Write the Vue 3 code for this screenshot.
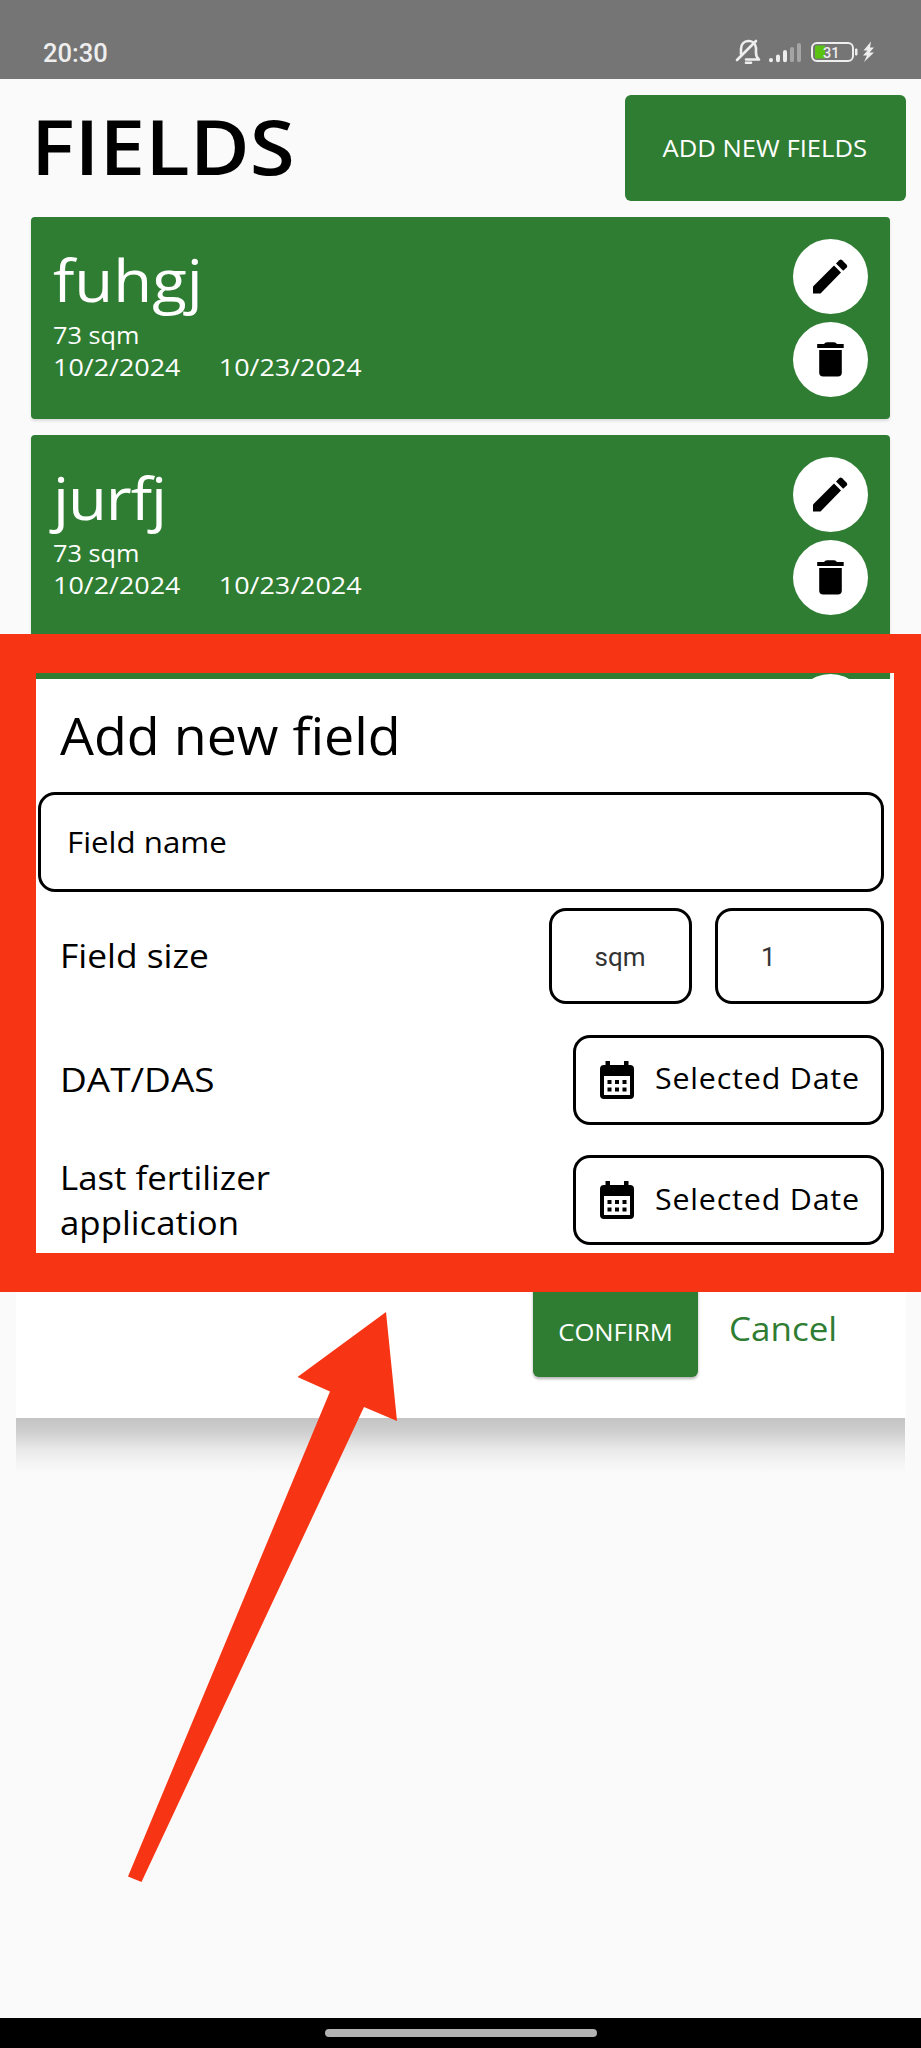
<script setup>
const fields = [
  { name: 'fuhgj', size: '73 sqm', from: '10/2/2024', to: '10/23/2024' },
  { name: 'jurfj', size: '73 sqm', from: '10/2/2024', to: '10/23/2024', tight: true },
  { name: '', size: '', from: '', to: '' },
]
const dateRows = [
  { label: 'DAT/DAS', kind: 'short' },
  { label: 'Last fertilizer application', kind: 'long' },
]
</script>

<template>
  <div class="screen">
    <header class="status">
      <span class="clock">20:30</span>
      <svg class="tray" width="144" height="30" viewBox="0 0 144 30" fill="none">
        <g stroke="#eee" stroke-width="2.6" stroke-linecap="round" stroke-linejoin="round">
          <path d="M7 17V12C7 2 21 1 22 11V16C22 19 23 21 25 22.500H12" />
          <path d="M3 23L22 4" />
          <path d="M12 25.800H17" />
        </g>
        <g stroke-width="4" stroke-linecap="round">
          <path d="M37 23V23.200M44 19.500V23.200M51 15V23.200" stroke="#eee" />
          <path d="M58 12V23.200M65 8V23.200" stroke="#a5a5a5" />
        </g>
        <rect x="78" y="6" width="41" height="18" rx="5" stroke="#eee" stroke-width="2" />
        <path d="M82 8.500H91V21.500H82Q81 21.500 81 20V10Q81 8.500 82 8.500Z" fill="#5bc214" />
        <path d="M121.500 12H123V18H121.500Z" fill="#eee" stroke="#eee" />
        <text x="89" y="20.500" class="charge">31</text>
        <path d="M137 4.500L129.500 13.500H133.500L129 18.500H133L130 25L140 15.500H135.500L140 10.500H136Z" fill="#eee" />
      </svg>
    </header>

    <div class="top">
      <h1>FIELDS</h1>
      <button class="add"><span>ADD NEW FIELDS</span></button>
    </div>

    <main class="list">
      <article v-for="(f, i) in fields" :key="i" class="card">
        <div class="info">
          <h2 :class="{ tight: f.tight }">{{ f.name }}</h2>
          <p class="size">{{ f.size }}</p>
          <p class="dates"><span class="from">{{ f.from }}</span><span class="to">{{ f.to }}</span></p>
        </div>
        <div class="actions">
          <svg width="75" height="75" viewBox="0 0 75 75">
            <circle cx="37.5" cy="37.500" r="37.500" fill="#fff" />
            <path d="M20 47.500L41 26.500L48 33.500L27.500 54.500H20Z" />
            <path d="M43 24.500L46.300 21.200Q47.700 20 49.200 21.200L53.700 25.700Q54.900 27.200 53.700 28.600L50.200 31.800Z" />
          </svg>
          <svg width="75" height="75" viewBox="0 0 75 75">
            <circle cx="37.500" cy="37.500" r="37.500" fill="#fff" />
            <path d="M24.200 22H31Q32 20.200 34 20.200H41Q43 20.200 44 22H50.700V26H24.200Z" />
            <path d="M26.200 28H48.800V50.500Q48.800 54.500 44.800 54.500H30.200Q26.200 54.500 26.200 50.500Z" />
          </svg>
        </div>
      </article>
    </main>

    <section class="dialog">
      <h3>Add new field</h3>
      <div class="box name"><span>Field name</span></div>
      <div class="row sizes">
        <span class="label l-size">Field size</span>
        <div class="box unit">sqm</div>
        <div class="box qty">1</div>
      </div>
      <div v-for="r in dateRows" :key="r.kind" class="row date">
        <span class="label" :class="'l-' + r.kind">{{ r.label }}</span>
        <div class="box pick">
          <svg width="34" height="38" viewBox="0 0 34 38">
            <path fill-rule="evenodd" d="M5.500 0H10V4H24V0H28.500V4H30Q34 4 34 8V34Q34 38 30 38H4Q0 38 0 34V8Q0 4 4 4H5.500ZM4 15V34H30V15Z" />
            <path d="M7.500 19H11.500V23H7.500ZM15 19H19V23H15ZM22.500 19H26.500V23H22.500ZM7.500 26.500H11.500V30.500H7.500ZM15 26.500H19V30.500H15ZM22.500 26.500H26.500V30.500H22.500Z" />
          </svg>
          <span>Selected Date</span>
        </div>
      </div>
      <div class="buttons">
        <button class="confirm"><span>CONFIRM</span></button>
        <span class="cancel">Cancel</span>
      </div>
    </section>
    <div class="shade"></div>

    <div class="frame"></div>
    <svg class="arrow" width="280" height="580" viewBox="0 0 280 580">
      <path d="M266 2L177.500 67L210 81.500L8 566.500L21.500 572L244 97L277 111Z" fill="#f73413" />
    </svg>

    <footer class="nav"><i></i></footer>
  </div>
</template>

<style>
body { background: #fafafa; }
</style>

<style scoped>
* { box-sizing: border-box; margin: 0; padding: 0; }
.screen {
  position: relative; width: 921px; height: 2048px; overflow: hidden;
  display: flex; flex-direction: column; background: #fafafa; color: #000;
  font-family: "Open Sans", "Noto Sans", sans-serif; font-weight: 470; white-space: nowrap;
}
button { border: 0; font: inherit; color: #fff; background: #2e7d32; }
button span { display: inline-block; transform: scaleX(1.09); }
.status {
  height: 79px; background: #757575; flex: none; display: flex;
  justify-content: space-between; padding: 37px 43.5px 0 43px;
}
.clock { font: 500 25.5px/32px Roboto, sans-serif; color: #eee; }
.charge { font: 500 14.5px Roboto, sans-serif; fill: #eee; }
.top { height: 138px; flex: none; display: flex; justify-content: space-between; padding: 16px 15.5px 0 31px; }
h1 { font-size: 76px; font-weight: 600; line-height: 102px; transform: scaleX(1.077); transform-origin: left; }
.add { width: 280.5px; height: 106px; border-radius: 6px; font-size: 23.5px; line-height: 106px; }
.list { flex: 1; min-height: 0; padding: 0 31px; display: flex; flex-direction: column; gap: 15.5px; }
.card {
  height: 202px; flex: none; background: #2e7d32; color: #fff; border-radius: 4px;
  display: flex; justify-content: space-between; padding: 22px 22px 0;
  box-shadow: 0 2px 3px rgba(0, 0, 0, .12);
}
h2 { height: 80px; font-size: 58px; font-weight: 470; line-height: 81px; transform: scaleX(1.095); transform-origin: left; }
.tight { letter-spacing: -1px; }
.size, .dates { font-size: 23.5px; line-height: 32px; height: 32px; transform-origin: left; }
.size { transform: scaleX(1.075); }
.dates { display: flex; gap: 33.5px; transform: scaleX(1.145); }
.actions { display: flex; flex-direction: column; gap: 8px; }
.dialog {
  position: absolute; left: 16px; top: 679px; width: 889.5px; height: 739px; background: #fff;
  display: flex; flex-direction: column; padding: 0 22px 0 21.5px;
}
h3 { font-size: 50.5px; font-weight: 470; line-height: 114px; height: 113px; margin-left: 22px; transform: scaleX(1.064); transform-origin: left; }
.box { border: 3px solid #000; border-radius: 17px; flex: none; display: flex; align-items: center; }
.name { height: 100px; font-size: 30px; font-weight: 400; padding-left: 26px; }
.name span { position: relative; top: -1px; transform: scaleX(1.042); transform-origin: left; }
.row { display: flex; align-items: center; justify-content: flex-end; padding-left: 22.5px; flex: none; }
.label { margin-right: auto; font-size: 33px; line-height: 44.5px; transform: scaleX(1.055); transform-origin: left; }
.l-size { transform: scaleX(1.07); padding-top: 1px; }
.l-short { transform: scaleX(1.12); padding-top: 2px; }
.l-long { white-space: normal; width: 240px; padding-top: 1px; }
.sizes { height: 96px; margin-top: 16px; }
.unit, .qty { height: 96px; padding-top: 2px; font: 400 26px Roboto, sans-serif; color: #333; }
.unit { width: 143px; justify-content: center; margin-right: 23.5px; }
.qty { width: 168.5px; padding-left: 43px; }
.date { height: 90px; margin-top: 30.5px; }
.pick { width: 310.5px; height: 90px; padding-left: 24px; font-size: 29px; font-weight: 400; gap: 21px; letter-spacing: .75px; }
.pick span { position: relative; top: -2px; transform: scaleX(1.05); transform-origin: left; }
.buttons { display: flex; margin-top: 37px; padding-left: 495.5px; gap: 31px; }
.confirm { width: 165px; height: 95px; border-radius: 6px; font-size: 23.5px; line-height: 100px; box-shadow: 0 2px 3px rgba(0, 0, 0, .3); }
.cancel { color: #2e7d32; font-size: 33px; line-height: 93px; transform: scaleX(1.06); transform-origin: left; }
.shade {
  position: absolute; left: 16px; top: 1418px; width: 889px; height: 56px;
  background: linear-gradient(#c4c4c4, #cfcfcf 25%, #e8e8e8 55%, #f4f4f4 80%, #fafafa);
}
.frame {
  position: absolute; left: 0; top: 634px; width: 921px; height: 657.5px; border: solid #f73413;
  border-width: 39px 27px 39.5px 36px;
}
.arrow { position: absolute; left: 120px; top: 1310px; }
.nav { height: 30px; flex: none; background: #000; display: flex; justify-content: center; padding-top: 11px; z-index: 1; }
.nav i { width: 272px; height: 8px; border-radius: 4px; background: #b3b3b3; }
</style>
